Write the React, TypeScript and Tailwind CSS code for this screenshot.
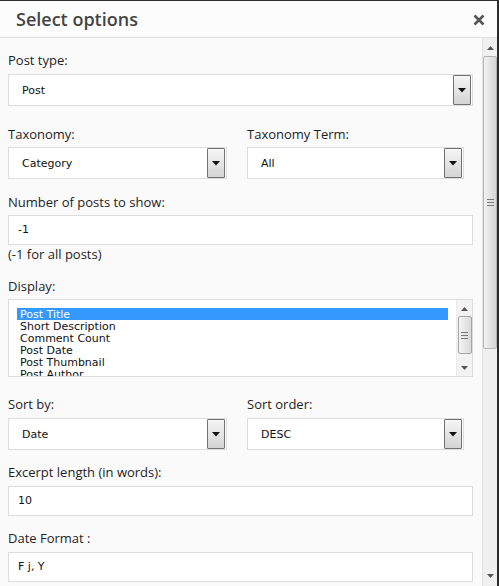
import React from 'react'

const labelFont = { fontFamily: '"Open Sans", "Liberation Sans", sans-serif' }
const fieldFont = { fontFamily: '"DejaVu Sans", Verdana, sans-serif' }

function DropArrow() {
  return (
    <div className="flex h-[30px] w-[18px] shrink-0 items-center justify-center rounded-[1px] border border-[#707070] bg-gradient-to-b from-[#f6f6f6] to-[#d4d4d4]">
      <svg width="8" height="5" viewBox="0 0 8 5">
        <path d="M0 0h8L4 4.5z" fill="#111" />
      </svg>
    </div>
  )
}

function Select({ value, className = '' }: { value: string; className?: string }) {
  return (
    <div
      className={`flex h-[32px] items-center justify-between border border-[#dcdcdc] bg-white pl-[13px] pr-[1px] text-[11px] text-[#111] ${className}`}
      style={fieldFont}
    >
      <span className="pt-[2px]">{value}</span>
      <DropArrow />
    </div>
  )
}

function TextInput({ value }: { value: string }) {
  return (
    <div
      className="flex h-[30px] items-center border border-[#dcdcdc] bg-white pl-[9px] pt-[1px] text-[11px] text-[#111]"
      style={fieldFont}
    >
      {value}
    </div>
  )
}

function Label({ children, className = '' }: { children: React.ReactNode; className?: string }) {
  return (
    <div className={`h-[18px] text-[13px] leading-[18px] text-[#1e1e1e] ${className}`} style={labelFont}>
      {children}
    </div>
  )
}

function Grip() {
  return (
    <div className="flex flex-col gap-[2px]">
      <div className="h-px w-[7px] bg-[#777]" />
      <div className="h-px w-[7px] bg-[#777]" />
      <div className="h-px w-[7px] bg-[#777]" />
    </div>
  )
}

function UpArrow() {
  return (
    <svg width="7" height="4" viewBox="0 0 7 4">
      <path d="M0 4h7L3.5 0z" fill="#555" />
    </svg>
  )
}

function DownArrow() {
  return (
    <svg width="7" height="4" viewBox="0 0 7 4">
      <path d="M0 0h7L3.5 4z" fill="#555" />
    </svg>
  )
}

const displayItems = ['Post Title', 'Short Description', 'Comment Count', 'Post Date', 'Post Thumbnail', 'Post Author']

export default function App() {
  return (
    <div className="flex h-[586px] w-[499px] flex-col overflow-hidden border-t border-r-2 border-[#2a2a2a] bg-[#fafafa]">
      {/* Header */}
      <div className="flex h-[37px] shrink-0 items-center justify-between border-b border-[#dedede] bg-[#fcfcfc] pl-4 pr-[12px] pt-[1px]">
        <h1 className="text-[18px] font-semibold text-[#444]" style={labelFont}>
          Select options
        </h1>
        <svg width="12" height="12" viewBox="0 0 12 12">
          <path d="M1.5 1.5l9 9M10.5 1.5l-9 9" stroke="#555" strokeWidth="2.6" />
        </svg>
      </div>

      {/* Body */}
      <div className="flex min-h-0 flex-1">
        <div className="flex-1 pl-2 pr-[9px] pt-[13px]">
          <Label>Post type:</Label>
          <Select value="Post" className="mt-[5px]" />

          <div className="mt-[19px] flex">
            <div className="w-[239px]">
              <Label>Taxonomy:</Label>
              <Select value="Category" className="mt-[4px] w-[219px]" />
            </div>
            <div>
              <Label>Taxonomy Term:</Label>
              <Select value="All" className="mt-[4px] w-[217px]" />
            </div>
          </div>

          <Label className="mt-[14px]">Number of posts to show:</Label>
          <div className="mt-[4px]">
            <TextInput value="-1" />
          </div>
          <Label>(-1 for all posts)</Label>

          <Label className="mt-[14px]">Display:</Label>
          <div className="mt-[4px] flex h-[78px] border border-[#dcdcdc] bg-white">
            <div className="flex-1 overflow-hidden pl-[8px] pr-[8px] pt-[8px] text-[11px] leading-[13px] text-[#111]" style={fieldFont}>
              {displayItems.map((item, i) => (
                <div key={item} className={`h-[12px] pl-[3px] ${i === 0 ? 'bg-[#3399ff] text-white' : ''}`}>
                  {item}
                </div>
              ))}
            </div>
            <div className="flex w-[16px] flex-col items-center border-l border-[#ececec] bg-[#f3f3f3] py-[1px]">
              <div className="flex h-[15px] items-center">
                <UpArrow />
              </div>
              <div className="flex h-[38px] w-[14px] items-center justify-center rounded-[2px] border border-[#a5a5a5] bg-gradient-to-r from-[#f4f4f4] to-[#d9d9d9]">
                <Grip />
              </div>
              <div className="flex-1" />
              <div className="flex h-[15px] items-center">
                <DownArrow />
              </div>
            </div>
          </div>

          <div className="mt-[18px] flex">
            <div className="w-[239px]">
              <Label>Sort by:</Label>
              <Select value="Date" className="mt-[5px] w-[219px]" />
            </div>
            <div>
              <Label>Sort order:</Label>
              <Select value="DESC" className="mt-[5px] w-[217px]" />
            </div>
          </div>

          <Label className="mt-[13px]">Excerpt length (in words):</Label>
          <div className="mt-[5px]">
            <TextInput value="10" />
          </div>

          <Label className="mt-[13px]">Date Format :</Label>
          <div className="mt-[5px]">
            <TextInput value="F j, Y" />
          </div>
        </div>

        {/* Outer scrollbar */}
        <div className="flex w-[15px] shrink-0 flex-col items-center border-l border-[#e2e2e2] bg-[#f0f0f0]">
          <div className="flex h-[18px] items-center pt-[2px]">
            <UpArrow />
          </div>
          <div className="flex h-[293px] w-[14px] items-center justify-center rounded-[2px] border border-[#b5b5b5] bg-gradient-to-r from-[#f2f2f2] to-[#d6d6d6]">
            <Grip />
          </div>
          <div className="flex-1" />
          <div className="flex h-[12px] items-start">
            <DownArrow />
          </div>
        </div>
      </div>
    </div>
  )
}
